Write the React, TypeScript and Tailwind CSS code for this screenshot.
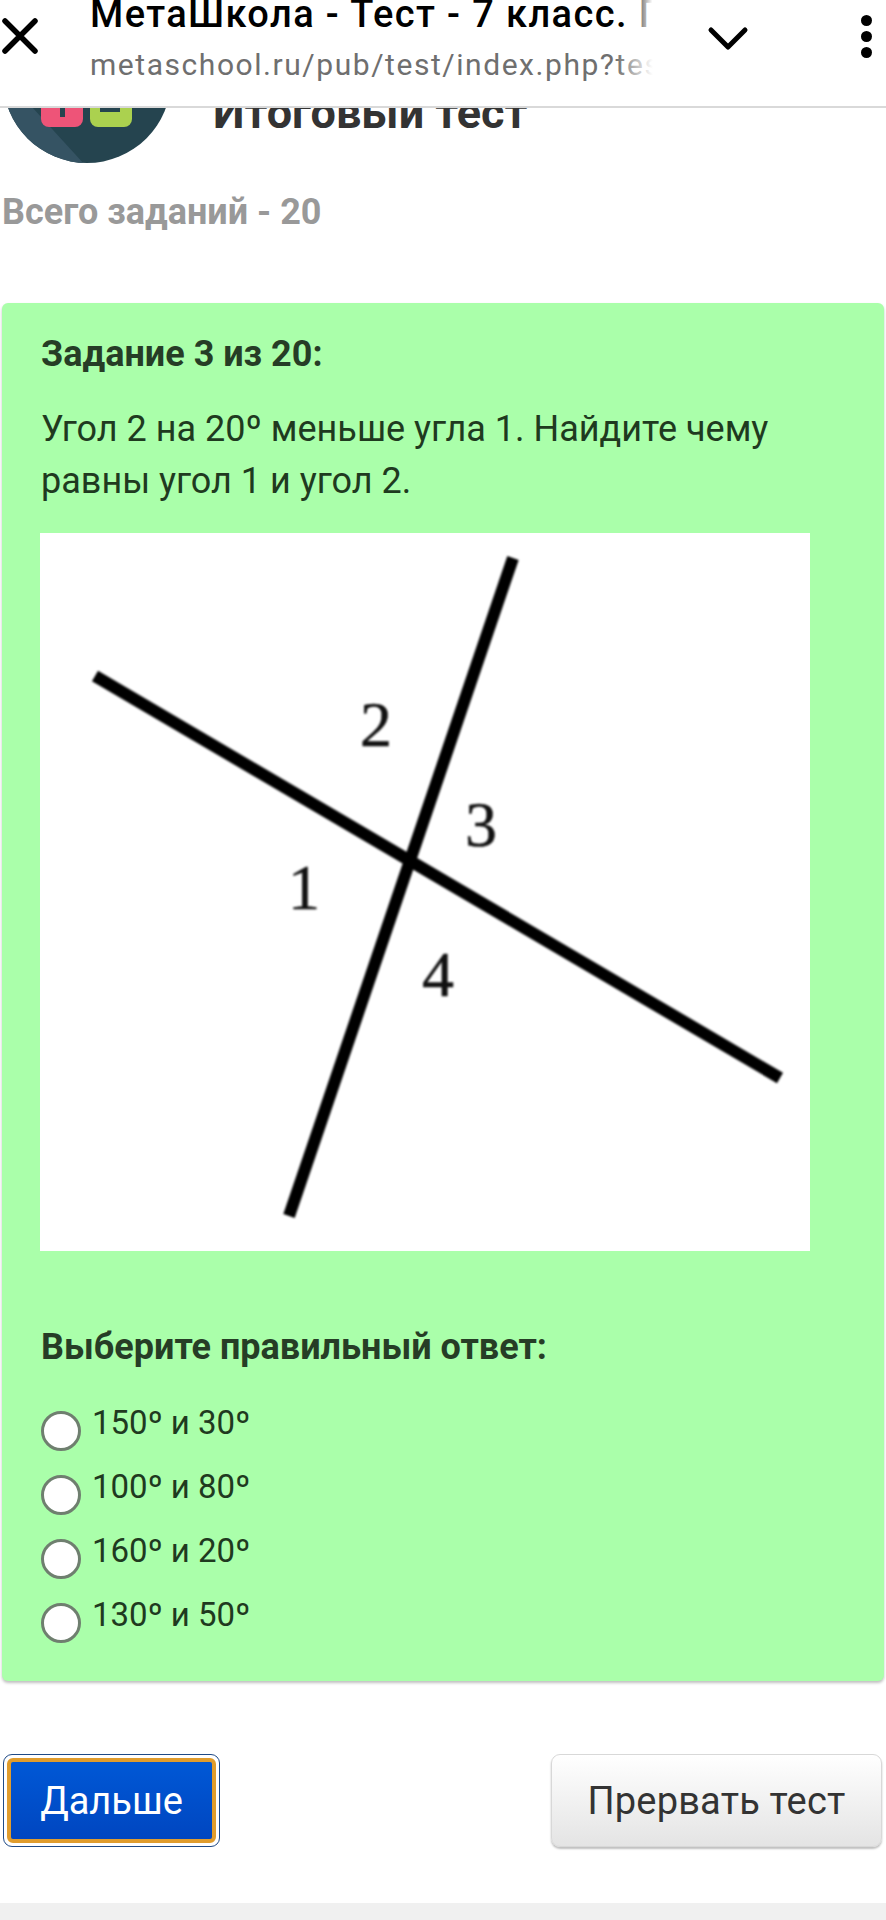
import React from 'react';

const answers = ['150º и 30º', '100º и 80º', '160º и 20º', '130º и 50º'];

function BrowserBar() {
  return (
    <header className="flex h-[108px] items-start border-b-2 border-[#d9d9d9] bg-white">
      <svg width="44" height="44" viewBox="0 0 44 44" className="mt-[14px] shrink-0">
        <path d="M5 7 L35 37 M35 7 L5 37" stroke="#000" strokeWidth="5.5" strokeLinecap="round" />
      </svg>
      <div className="ml-[46px] w-[572px] shrink-0 overflow-hidden">
        <div className="relative -mt-[7px] whitespace-nowrap text-[38px] leading-[42px] font-medium tracking-[1.4px] text-black">
          МетаШкола - Тест - 7 класс. Геометрия
          <div className="absolute top-0 right-0 h-full w-[32px] bg-gradient-to-l from-white from-30% to-transparent" />
        </div>
        <div className="relative mt-[12px] whitespace-nowrap text-[30px] leading-[36px] tracking-[1.55px] text-[#6f6f6f]">
          metaschool.ru/pub/test/index.php?test=1234
          <div className="absolute top-0 right-0 h-full w-[46px] bg-gradient-to-l from-white from-20% to-transparent" />
        </div>
      </div>
      <svg width="44" height="28" viewBox="0 0 44 28" className="mt-[24px] ml-[44px] shrink-0">
        <path d="M5 6 L22 23 L39 6" fill="none" stroke="#000" strokeWidth="5" strokeLinecap="round" strokeLinejoin="round" />
      </svg>
      <div className="mt-[15px] ml-[111px] flex shrink-0 flex-col gap-[5px]">
        <div className="h-[11px] w-[11px] rounded-full bg-black" />
        <div className="h-[11px] w-[11px] rounded-full bg-black" />
        <div className="h-[11px] w-[11px] rounded-full bg-black" />
      </div>
    </header>
  );
}

function Logo() {
  return (
    <svg width="175" height="57" viewBox="0 108 175 57" className="shrink-0">
      <defs>
        <clipPath id="disc">
          <circle cx="87" cy="79" r="84" />
        </clipPath>
      </defs>
      <circle cx="87" cy="79" r="84" fill="#25444f" />
      <path d="M0 107 L32 107 L85 165 L0 165 Z" fill="#355363" clipPath="url(#disc)" />
      <rect x="41" y="90" width="42" height="37" rx="8" fill="#ee5478" />
      <rect x="90" y="90" width="42" height="37" rx="8" fill="#abd14f" />
      <rect x="60" y="100" width="5" height="17" fill="#25444f" />
      <rect x="100" y="107" width="20" height="5" fill="#25444f" />
    </svg>
  );
}

function Diagram() {
  return (
    <div className="w-[770px] bg-white">
      <svg width="770" height="718" viewBox="40 533 770 718" className="block blur-[0.8px]">
        <path d="M95 676 L780 1078" stroke="#000" strokeWidth="12" />
        <path d="M513 558 L289 1216" stroke="#000" strokeWidth="12" />
        <g fontFamily="'Liberation Serif', serif" fontSize="64" fill="#111" stroke="#111" strokeWidth="0.5">
          <text x="360" y="746">2</text>
          <text x="465" y="846">3</text>
          <text x="288" y="909">1</text>
          <text x="422" y="996">4</text>
        </g>
      </svg>
    </div>
  );
}

export default function App() {
  return (
    <div className="flex h-[1920px] w-[886px] flex-col overflow-hidden bg-white font-['Roboto',sans-serif]">
      <BrowserBar />
      <div className="flex h-[57px] items-start overflow-hidden">
        <Logo />
        <div className="-mt-[20px] ml-[38px] text-[45px] leading-[50px] font-bold text-[#333]">Итоговый тест</div>
      </div>
      <div className="mt-[27px] pl-[2px] text-[36px] leading-[40px] font-bold text-[#999]">Всего заданий - 20</div>

      <section className="mx-[2px] mt-[71px] h-[1378px] rounded-[6px] bg-[#aaffaa] pt-[30px] pl-[39px] text-[#1f3a1f] shadow-[0_2px_3px_rgba(0,0,0,0.25)]">
        <div className="text-[36px] leading-[42px] font-bold text-[#263d26]">Задание 3 из 20:</div>
        <p className="mt-[28px] w-[780px] text-[36px] leading-[52px]">
          Угол 2 на 20º меньше угла 1. Найдите чему равны угол 1 и угол 2.
        </p>
        <div className="mt-[26px] -ml-[1px]">
          <Diagram />
        </div>
        <div className="mt-[75px] text-[36px] leading-[42px] font-bold text-[#263d26]">Выберите правильный ответ:</div>
        <div className="mt-[43px] flex flex-col gap-[24px]">
          {answers.map((a) => (
            <label key={a} className="flex h-[40px] items-start gap-[11px]">
              <span className="h-[40px] w-[40px] shrink-0 rounded-full border-[3px] border-[#6f7f6f] bg-white" />
              <span className="-mt-[8px] text-[33px] leading-[40px]">{a}</span>
            </label>
          ))}
        </div>
      </section>

      <div className="mt-[73px] flex justify-between pr-[4px] pl-[3px]">
        <div className="h-[93px] w-[217px] rounded-[9px] border border-[#1f4a86] bg-white p-[3px]">
          <button className="h-full w-full rounded-[6px] border-[4px] border-[#e09c2c] bg-gradient-to-b from-[#0058d6] to-[#0046c0] text-[38px] leading-none text-white">
            Дальше
          </button>
        </div>
        <button className="h-[93px] w-[331px] rounded-[9px] border border-[#d8d8d8] bg-gradient-to-b from-white to-[#e4e4e4] text-[38px] leading-none tracking-[0.2px] text-[#333] shadow-[0_2px_2px_rgba(0,0,0,0.25)]">
          Прервать тест
        </button>
      </div>

      <div className="mt-auto h-[17px] bg-[#f0f0f0]" />
    </div>
  );
}
